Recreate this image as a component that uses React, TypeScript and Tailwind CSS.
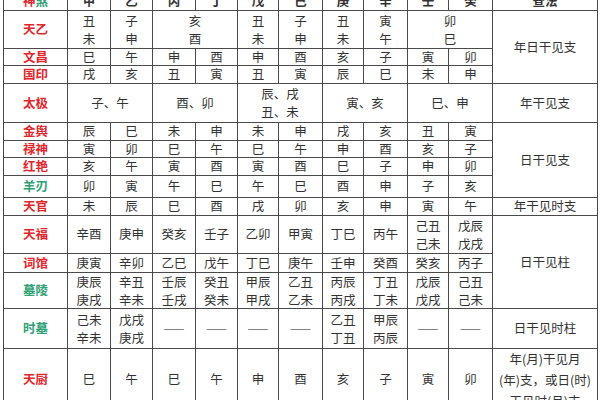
import React from "react";

const RED = "text-[#e2262c]";
const GREEN = "text-[#2f9f74]";

type CP = { children?: React.ReactNode; className?: string };
function C({ children, className = "" }: CP) {
  return (
    <div className={`bg-white flex items-center justify-center text-center ${className}`}>
      {children}
    </div>
  );
}
function Two({ a, b }: { a: string; b: string }) {
  return (
    <div className="flex flex-col leading-[18px]">
      <span>{a}</span>
      <span>{b}</span>
    </div>
  );
}
function L({ t, c }: { t: string; c: string }) {
  return <C className={`${c} font-semibold`}>{t}</C>;
}
function Dash() {
  return <C className="text-[#666]">——</C>;
}
function Row({ v }: { v: string[] }) {
  return (
    <>
      {v.map((x, i) => (
        <C key={i}>{x}</C>
      ))}
    </>
  );
}

export default function App() {
  const heads = ["甲", "乙", "丙", "丁", "戊", "己", "庚", "辛", "壬", "癸"];
  return (
    <div
      className="w-[600px] h-[400px] overflow-hidden bg-white text-[#333] text-[12.5px]"
      style={{ fontFamily: '"Noto Sans CJK SC", "Noto Sans", sans-serif' }}
    >
      <div className="ml-[3px] mt-[-9px] w-[595px] bg-[#4a4a4a] p-px grid gap-px grid-cols-[63px_42px_41px_42px_41px_40px_43px_40px_43px_40px_43px_104px] grid-rows-[18px_37px_16px_17px_38px_17px_16px_17px_21px_17px_37px_18px_35px_39px_60px]">
        {/* header */}
        <C className="font-bold">
          <span className={RED}>神</span>
          <span className={GREEN}>煞</span>
        </C>
        {heads.map((h) => (
          <C key={h} className="font-bold">
            {h}
          </C>
        ))}
        <C className="font-bold">查法</C>

        {/* 天乙 */}
        <L t="天乙" c={RED} />
        <C><Two a="丑" b="未" /></C>
        <C><Two a="子" b="申" /></C>
        <C className="col-span-2"><Two a="亥" b="酉" /></C>
        <C><Two a="丑" b="未" /></C>
        <C><Two a="子" b="申" /></C>
        <C><Two a="丑" b="未" /></C>
        <C><Two a="寅" b="午" /></C>
        <C className="col-span-2"><Two a="卯" b="巳" /></C>
        <C className="row-span-3">年日干见支</C>

        {/* 文昌 */}
        <L t="文昌" c={RED} />
        <Row v={["巳", "午", "申", "酉", "申", "酉", "亥", "子", "寅", "卯"]} />

        {/* 国印 */}
        <L t="国印" c={RED} />
        <Row v={["戌", "亥", "丑", "寅", "丑", "寅", "辰", "巳", "未", "申"]} />

        {/* 太极 */}
        <L t="太极" c={RED} />
        <C className="col-span-2">子、午</C>
        <C className="col-span-2">酉、卯</C>
        <C className="col-span-2"><Two a="辰、戌" b="丑、未" /></C>
        <C className="col-span-2">寅、亥</C>
        <C className="col-span-2">巳、申</C>
        <C>年干见支</C>

        {/* 金舆 */}
        <L t="金舆" c={RED} />
        <Row v={["辰", "巳", "未", "申", "未", "申", "戌", "亥", "丑", "寅"]} />
        <C className="row-span-4">日干见支</C>

        {/* 禄神 */}
        <L t="禄神" c={RED} />
        <Row v={["寅", "卯", "巳", "午", "巳", "午", "申", "酉", "亥", "子"]} />

        {/* 红艳 */}
        <L t="红艳" c={RED} />
        <Row v={["亥", "午", "寅", "酉", "寅", "酉", "巳", "子", "申", "卯"]} />

        {/* 羊刃 */}
        <L t="羊刃" c={GREEN} />
        <Row v={["卯", "寅", "午", "巳", "午", "巳", "酉", "申", "子", "亥"]} />

        {/* 天官 */}
        <L t="天官" c={RED} />
        <Row v={["未", "辰", "巳", "酉", "戌", "卯", "亥", "申", "寅", "午"]} />
        <C>年干见时支</C>

        {/* 天福 */}
        <L t="天福" c={RED} />
        <Row v={["辛酉", "庚申", "癸亥", "壬子", "乙卯", "甲寅", "丁巳", "丙午"]} />
        <C><Two a="己丑" b="己未" /></C>
        <C><Two a="戊辰" b="戊戌" /></C>
        <C className="row-span-3">日干见柱</C>

        {/* 词馆 */}
        <L t="词馆" c={RED} />
        <Row v={["庚寅", "辛卯", "乙巳", "戊午", "丁巳", "庚午", "壬申", "癸酉", "癸亥", "丙子"]} />

        {/* 墓 */}
        <L t="墓陵" c={GREEN} />
        <C><Two a="庚辰" b="庚戌" /></C>
        <C><Two a="辛丑" b="辛未" /></C>
        <C><Two a="壬辰" b="壬戌" /></C>
        <C><Two a="癸丑" b="癸未" /></C>
        <C><Two a="甲辰" b="甲戌" /></C>
        <C><Two a="乙丑" b="乙未" /></C>
        <C><Two a="丙辰" b="丙戌" /></C>
        <C><Two a="丁丑" b="丁未" /></C>
        <C><Two a="戊辰" b="戊戌" /></C>
        <C><Two a="己丑" b="己未" /></C>

        {/* 时墓 */}
        <L t="时墓" c={GREEN} />
        <C><Two a="己未" b="辛未" /></C>
        <C><Two a="戊戌" b="庚戌" /></C>
        <Dash />
        <Dash />
        <Dash />
        <Dash />
        <C><Two a="乙丑" b="丁丑" /></C>
        <C><Two a="甲辰" b="丙辰" /></C>
        <Dash />
        <Dash />
        <C>日干见时柱</C>

        {/* 天厨 */}
        <L t="天厨" c={RED} />
        <Row v={["巳", "午", "巳", "午", "申", "酉", "亥", "子", "寅", "卯"]} />
        <C>
          <div className="flex flex-col leading-[21px]">
            <span>年(月)干见月</span>
            <span>(年)支，或日(时)</span>
            <span>干见时(月)支</span>
          </div>
        </C>
      </div>
    </div>
  );
}
